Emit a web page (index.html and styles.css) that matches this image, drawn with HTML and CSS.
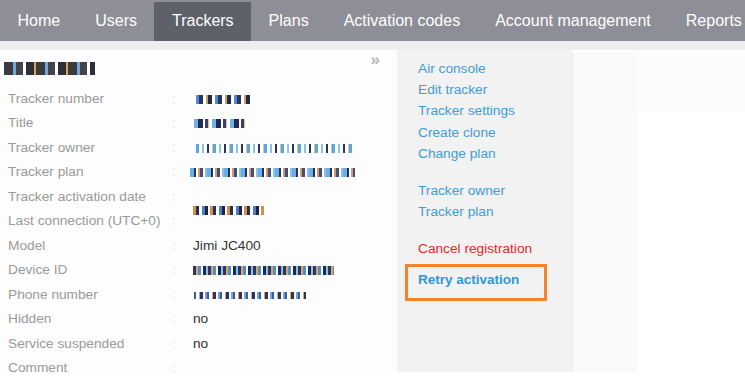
FILE: index.html
```html
<!DOCTYPE html>
<html lang="en">

<head>
    <title>Tracker</title>

    <link rel="stylesheet" href="styles.css">
</head>

<body>
    <nav class="topnav">
        <a class="topnav__item">Home</a>
        <a class="topnav__item">Users</a>
        <a class="topnav__item topnav__item--active">Trackers</a>
        <a class="topnav__item">Plans</a>
        <a class="topnav__item">Activation codes</a>
        <a class="topnav__item">Account management</a>
        <a class="topnav__item">Reports</a>
    </nav>

    <div class="page">
        <section class="details">
            <div class="details__head">
                <span class="mosaic mosaic--title"></span>
                <span class="details__collapse">&raquo;</span>
            </div>

            <div class="details__table">
                <span class="details__label">Tracker number</span><span class="details__colon">:</span><span class="details__value"><span class="mosaic mosaic--number"></span></span>
                <span class="details__label">Title</span><span class="details__colon">:</span><span class="details__value"><span class="mosaic mosaic--short"></span></span>
                <span class="details__label">Tracker owner</span><span class="details__colon">:</span><span class="details__value"><span class="mosaic mosaic--owner"></span></span>
                <span class="details__label">Tracker plan</span><span class="details__colon">:</span><span class="details__value"><span class="mosaic mosaic--plan"></span></span>
                <span class="details__label">Tracker activation date</span><span class="details__colon">:</span><span class="details__value details__value--low"><span class="mosaic mosaic--date"></span></span>
                <span class="details__label">Last connection (UTC+0)</span><span class="details__colon">:</span><span class="details__value"></span>
                <span class="details__label">Model</span><span class="details__colon">:</span><span class="details__value">Jimi JC400</span>
                <span class="details__label">Device ID</span><span class="details__colon">:</span><span class="details__value"><span class="mosaic mosaic--device"></span></span>
                <span class="details__label">Phone number</span><span class="details__colon">:</span><span class="details__value"><span class="mosaic mosaic--phone"></span></span>
                <span class="details__label">Hidden</span><span class="details__colon">:</span><span class="details__value">no</span>
                <span class="details__label">Service suspended</span><span class="details__colon">:</span><span class="details__value">no</span>
                <span class="details__label">Comment</span><span class="details__colon">:</span><span class="details__value"></span>
            </div>
        </section>

        <aside class="actions">
            <div class="actions__group">
                <a class="actions__link">Air console</a>
                <a class="actions__link">Edit tracker</a>
                <a class="actions__link">Tracker settings</a>
                <a class="actions__link">Create clone</a>
                <a class="actions__link">Change plan</a>
            </div>
            <div class="actions__group">
                <a class="actions__link">Tracker owner</a>
                <a class="actions__link">Tracker plan</a>
            </div>
            <div class="actions__group">
                <a class="actions__link actions__link--danger">Cancel registration</a>
            </div>
            <div class="actions__highlight">
                <a class="actions__link actions__link--strong">Retry activation</a>
            </div>
        </aside>

        <section class="extra">
            <div class="extra__side"></div>
            <div class="extra__main">
                <div class="extra__top"></div>
            </div>
        </section>
    </div>
</body>

</html>
```

FILE: styles.css
```css
* {
    padding: 0;
    margin: 0;
    box-sizing: border-box;
}

body {
    background: #ffffff;
    font-family: "Liberation Sans", Arial, sans-serif;
    overflow: hidden;
}

.topnav {
    display: flex;
    height: 41px;
    background: #8d8e98;
    padding-top: 2px;
}

.topnav__item {
    color: #ffffff;
    font-size: 16px;
    line-height: 38px;
    padding: 0 17.5px;
    white-space: nowrap;
}

.topnav__item--active {
    background: #5e606a;
}

.page {
    display: flex;
    align-items: flex-start;
    padding-top: 9px;
    background: linear-gradient(#eeeeee 0 9px, #ffffff 9px);
    height: 340px;
}

/* Детали трекера */
.details {
    width: 397px;
    height: 331px;
    background: linear-gradient(#fdfdfd 0 323px, #ffffff 323px);
}

.details__head {
    display: flex;
    justify-content: space-between;
    padding: 3px 17px 0 4px;
    height: 36px;
}

.details__collapse {
    color: #b4b4b8;
    font-size: 17px;
    line-height: 14px;
    font-weight: bold;
}

.details__table {
    display: grid;
    grid-template-columns: 164px 21px 1fr;
    padding-left: 8px;
    grid-auto-rows: 24.5px;
    align-items: center;
    font-size: 13.7px;
}

.details__label {
    color: #9a9a9a;
    white-space: nowrap;
}

.details__colon {
    color: #e2e2e2;
}

.details__value {
    color: #333333;
}

.details__value--low {
    align-self: end;
    margin-bottom: -9px;
}

.mosaic {
    display: inline-block;
    height: 9px;
    vertical-align: middle;
}

.mosaic--title {
    width: 91px;
    height: 13px;
    margin-top: 9px;
    background: repeating-linear-gradient(90deg, #3a3a3f 0 9px, #6fa8d8 9px 12px, #444448 12px 19px, #ffffff 19px 22px, #2f3036 22px 30px, #d9a35a 30px 32px);
}

.mosaic--number {
    width: 57px;
    margin-left: 3px;
    background: repeating-linear-gradient(90deg, #4c8fd0 0 3px, #2d3260 3px 7px, #ffffff 7px 10px, #d1a35c 10px 12px, #1f2850 12px 16px, #ffffff 16px 19px);
}

.mosaic--short {
    width: 54px;
    margin-left: 1px;
    background: repeating-linear-gradient(90deg, #6fb2e8 0 4px, #232a55 4px 9px, #ffffff 9px 11px, #3a3f70 11px 14px, #e4c07a 14px 15px, #ffffff 15px 18px);
}

.mosaic--owner {
    width: 156px;
    margin-left: 3px;
    background: repeating-linear-gradient(90deg, #5aa5e6 0 3px, #ffffff 3px 6px, #8cc3ee 6px 8px, #ffffff 8px 11px, #2a3260 11px 13px, #ffffff 13px 16px, #e6c47b 16px 17px);
}

.mosaic--plan {
    width: 165px;
    margin-left: -3px;
    background: repeating-linear-gradient(90deg, #6aaee6 0 4px, #26305c 4px 6px, #ffffff 6px 8px, #d99a5a 8px 10px, #3c4f86 10px 13px, #ffffff 13px 15px, #8bc1ea 15px 17px);
}

.mosaic--date {
    width: 71px;
    background: repeating-linear-gradient(90deg, #d1914c 0 3px, #2a2f56 3px 6px, #ffffff 6px 9px, #4d7ec0 9px 12px, #1e2343 12px 15px, #ffffff 15px 17px);
}

.mosaic--device {
    width: 141px;
    background: repeating-linear-gradient(90deg, #2c3562 0 3px, #e0a75b 3px 5px, #4c8fd0 5px 8px, #ffffff 8px 10px, #1f2850 10px 13px, #8cc3ee 13px 15px);
}

.mosaic--phone {
    width: 112px;
    height: 7px;
    margin-left: 1px;
    background: repeating-linear-gradient(90deg, #3b5c9e 0 2px, #ffffff 2px 5px, #e0a75b 5px 6px, #2a3562 6px 9px, #ffffff 9px 11px, #6fa8d8 11px 13px);
}

/* Действия */
.actions {
    width: 174px;
    height: 322px;
    background: #f2f2f2;
    padding: 8px 0 0 8px;
    display: flex;
    flex-direction: column;
    gap: 16px;
}

.actions__group {
    display: flex;
    flex-direction: column;
    padding-left: 13px;
}

.actions__link {
    color: #3f9cd6;
    font-size: 13.7px;
    line-height: 21.2px;
    white-space: nowrap;
}

.actions__link--danger {
    color: #e42a2a;
}

.actions__link--strong {
    font-weight: bold;
    font-size: 13.5px;
    color: #2f98d6;
}

.actions__highlight {
    margin-top: -12px;
    width: 142px;
    height: 37px;
    border: 3px solid #f5842a;
    padding: 2px 0 0 10px;
}

/* Правая часть */
.extra {
    flex: 1;
    display: flex;
    height: 322px;
    padding-top: 2px;
}

.extra__side {
    width: 66px;
    background: #fafafa;
    border-left: 2px solid #f0f0f0;
}

.extra__main {
    flex: 1;
    background: #ffffff;
}

.extra__top {
    height: 60px;
    background: #fcfcfc;
}
```
